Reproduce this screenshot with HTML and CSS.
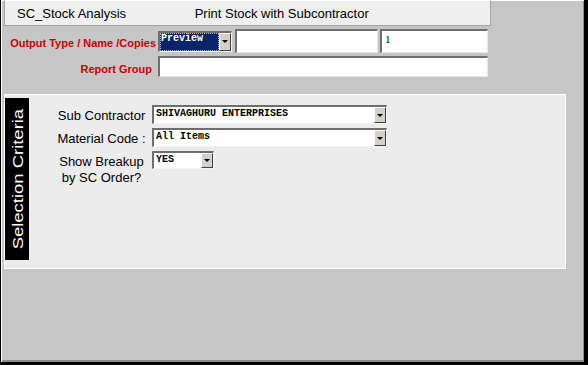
FILE: index.html
```html
<!DOCTYPE html>
<html lang="en">
<head>
    <meta charset="UTF-8">
    <meta name="viewport" content="width=device-width, initial-scale=1.0">
    <title>SC_Stock Analysis</title>
    <link rel="stylesheet" href="styles.css">
</head>
<body>
    <div class="window">
        <div class="title-bar">
            <span class="app-name">SC_Stock Analysis</span>
            <span class="report-name">Print Stock with Subcontractor</span>
        </div>

        <!-- Output options -->
        <div class="output-row">
            <label class="out-label">Output Type / Name /Copies</label>
            <div class="combo combo-type">
                <span class="combo-value selected">Preview</span>
                <span class="combo-btn"></span>
            </div>
            <input type="text" class="field field-name">
            <input type="text" class="field field-copies" value="1">
        </div>
        <div class="output-row row-group">
            <label class="out-label">Report Group</label>
            <input type="text" class="field field-group">
        </div>

        <!-- Selection criteria -->
        <div class="criteria">
            <div class="criteria-tab"><span>Selection Criteria</span></div>
            <div class="criteria-form">
                <label class="crit-label">Sub Contractor</label>
                <div class="combo combo-wide">
                    <span class="combo-value">SHIVAGHURU ENTERPRISES</span>
                    <span class="combo-btn"></span>
                </div>

                <label class="crit-label">Material Code :</label>
                <div class="combo combo-wide">
                    <span class="combo-value">All Items</span>
                    <span class="combo-btn"></span>
                </div>

                <label class="crit-label">Show Breakup<br>by SC Order?</label>
                <div class="combo combo-small">
                    <span class="combo-value">YES</span>
                    <span class="combo-btn"></span>
                </div>
            </div>
        </div>
    </div>
</body>
</html>
```

FILE: styles.css
```css
* {
    box-sizing: border-box;
}

body {
    margin: 0;
    font-family: "Liberation Sans", Arial, sans-serif;
    background-color: #c6c6c6;
}

.window {
    width: 588px;
    height: 365px;
    background-color: #c6c6c6;
    border-left: 1px solid #000;
    border-right: 4px solid #000;
    border-bottom: 3px solid #000;
    box-shadow: inset 1px 1px 0 #fff, inset -1px -2px 0 #8c8c8c;
}

.title-bar {
    margin-left: 3px;
    width: 487px;
    height: 26px;
    padding: 2px 0 0 12px;
    background-color: #efefef;
    border: 1px solid #a4a4a4;
    border-top-color: #fff;
    font-size: 13px;
    line-height: 22px;
    color: #000;
}

.app-name {
    display: inline-block;
    width: 174px;
}

.output-row {
    display: flex;
    align-items: center;
    height: 24px;
    margin-top: 3px;
}

.output-row.row-group {
    height: 21px;
}

.out-label {
    width: 155px;
    margin-right: 2px;
    padding-top: 4px;
    text-align: right;
    color: #cc0000;
    font-weight: bold;
    font-size: 11px;
    white-space: nowrap;
}

.row-group .out-label {
    padding-right: 4px;
}

.field {
    border-style: solid;
    border-width: 2px 1px 1px 2px;
    border-color: #6e6e6e #e6e6e6 #e6e6e6 #6e6e6e;
    background-color: #fff;
    padding: 1px 3px 6px 3px;
    font-family: "Liberation Serif", serif;
    font-size: 11px;
    color: #000;
    outline: none;
}

.field-name {
    width: 143px;
    height: 24px;
    margin-left: 3px;
}

.field-copies {
    width: 108px;
    height: 24px;
    margin-left: 2px;
}

.field-group {
    width: 330px;
    height: 21px;
}

/* combo boxes */
.combo {
    display: flex;
    background-color: #fff;
    border-style: solid;
    border-width: 2px 1px 1px 2px;
    border-color: #6e6e6e #f4f4f4 #f4f4f4 #6e6e6e;
}

.combo-type {
    width: 74px;
    height: 21px;
}

.combo-wide {
    width: 235px;
    height: 19px;
}

.combo-small {
    width: 62px;
    height: 18px;
}

.combo-value {
    flex: 1;
    padding: 1px 2px;
    font-family: "Liberation Mono", "Courier New", monospace;
    font-weight: bold;
    font-size: 10px;
    line-height: 12px;
    color: #000;
    white-space: nowrap;
    overflow: hidden;
}

.combo-value.selected {
    padding: 0 1px;
    background-color: #0a246a;
    color: #fff;
    outline: 1px dotted #b8b8b8;
    outline-offset: -1px;
}

.combo-btn {
    width: 12px;
    display: flex;
    align-items: center;
    justify-content: center;
    background-color: #d4d0c8;
    border: 1px solid;
    border-color: #fff #404040 #404040 #fff;
}

.combo-btn::after {
    content: "";
    border-left: 3px solid transparent;
    border-right: 3px solid transparent;
    border-top: 3px solid #000;
}

/* selection criteria panel */
.criteria {
    display: flex;
    align-items: flex-start;
    width: 562px;
    height: 175px;
    margin: 17px 0 0 3px;
    background-color: #ececec;
    border: 1px solid #fff;
}

.criteria-tab {
    width: 24px;
    height: 162px;
    margin-top: 3px;
    display: flex;
    align-items: center;
    justify-content: center;
    background-color: #000;
    color: #fff;
}

.criteria-tab span {
    writing-mode: vertical-rl;
    transform: rotate(180deg) scaleY(1.23);
    font-size: 15px;
    white-space: nowrap;
}

.criteria-form {
    display: grid;
    grid-template-columns: 89px auto;
    column-gap: 6px;
    row-gap: 4px;
    align-items: start;
    justify-items: start;
    margin-left: 28px;
    padding-top: 10px;
}

.crit-label {
    justify-self: stretch;
    padding-top: 3px;
    text-align: center;
    font-size: 13px;
    line-height: 16px;
    color: #000;
    white-space: nowrap;
}
```
